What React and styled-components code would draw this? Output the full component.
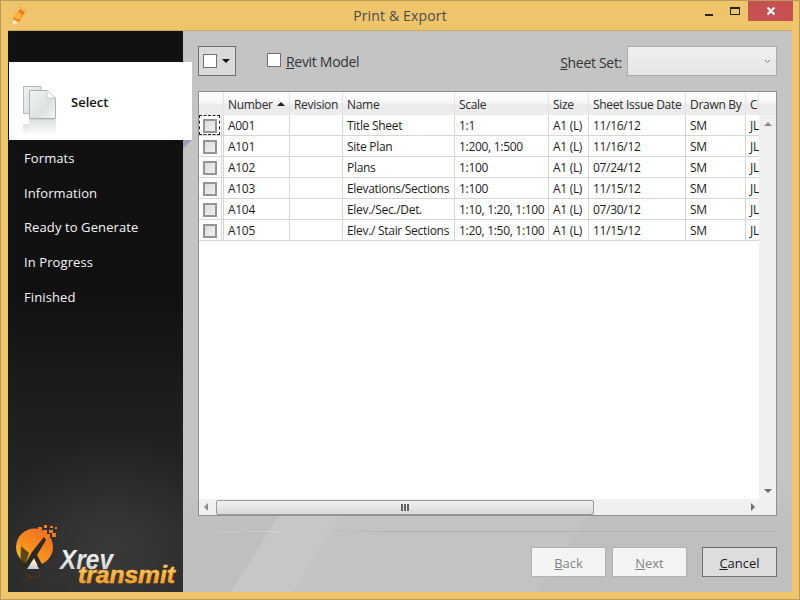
import React from 'react'
import styled, { createGlobalStyle } from 'styled-components'

const GlobalStyle = createGlobalStyle`
  html, body {
    margin: 0;
    padding: 0;
    height: 100%;
  }
  body {
    font-family: "Open Sans", "Liberation Sans", sans-serif;
    font-size: 12px;
    color: #1c1c1c;
  }
`

const COLUMNS = '25px 66px 53px 112px 94px 40px 97px 60px 13px'

const sheets = [
  { number: 'A001', name: 'Title Sheet', scale: '1:1', date: '11/16/12' },
  { number: 'A101', name: 'Site Plan', scale: '1:200, 1:500', date: '11/16/12' },
  { number: 'A102', name: 'Plans', scale: '1:100', date: '07/24/12' },
  { number: 'A103', name: 'Elevations/Sections', scale: '1:100', date: '11/15/12' },
  { number: 'A104', name: 'Elev./Sec./Det.', scale: '1:10, 1:20, 1:100', date: '07/30/12' },
  { number: 'A105', name: 'Elev./ Stair Sections', scale: '1:20, 1:50, 1:100', date: '11/15/12' },
]

const steps = ['Formats', 'Information', 'Ready to Generate', 'In Progress', 'Finished']

const Window = styled.div`
  width: 800px;
  height: 600px;
  box-sizing: border-box;
  background: #eec56a;
  border: 1px solid #b89c58;
  display: flex;
  flex-direction: column;
  overflow: hidden;
`

const TitleBar = styled.header`
  height: 29px;
  flex: none;
  display: flex;
  align-items: flex-start;
  padding: 0 6px 0 9px;
`

const TitleIcon = styled.svg`
  width: 18px;
  height: 20px;
  margin-top: 5px;
  flex: none;
`

const Title = styled.div`
  flex: 1;
  text-align: center;
  font-size: 14px;
  letter-spacing: 0.15px;
  line-height: 29px;
  color: #4b4b4b;
  padding-left: 76px;
`

const WindowControl = styled.div`
  width: ${p => p.$width}px;
  height: 20px;
  flex: none;
  display: flex;
  align-items: center;
  justify-content: center;
  background: ${p => p.$bg || 'transparent'};
`

const MinGlyph = styled.span`
  width: 8px;
  height: 2px;
  margin-top: 7px;
  background: #222;
`

const MaxGlyph = styled.span`
  width: 8px;
  height: 5px;
  border: 1px solid #222;
  border-top-width: 2px;
  margin-top: -1px;
`

const Body = styled.div`
  flex: 1;
  min-height: 0;
  display: flex;
  margin: 0 7px 7px;
  border-top: 1px solid #c9a85c;
`

const Sidebar = styled.nav`
  width: 175px;
  flex: none;
  padding-top: 31px;
  box-sizing: border-box;
  display: flex;
  flex-direction: column;
  background:
    radial-gradient(circle at 60% 92%, rgba(255, 255, 255, 0.07) 0, transparent 110px),
    linear-gradient(180deg, #111 0, #111 260px, #2a2a2a 500px, #2c2c2c 100%);
  position: relative;
  z-index: 1;
`

const SelectedStep = styled.div`
  height: 78px;
  width: 183px;
  margin-left: 1px;
  flex: none;
  background: #fff;
  display: flex;
  align-items: center;
  position: relative;
  font-weight: 600;
  font-size: 13px;
  line-height: 20px;
  padding-top: 2px;
  box-sizing: border-box;
  color: #111;

  &::after {
    content: '';
    position: absolute;
    right: 0;
    top: 100%;
    border-top: 8px solid #9a9eb6;
    border-right: 9px solid transparent;
  }
`

const SelectIcon = styled.svg`
  width: 34px;
  height: 50px;
  margin: 17px 14px 0 14px;
  flex: none;
`

const StepList = styled.div`
  padding-top: 1px;
`

const Step = styled.div`
  height: 34.7px;
  line-height: 34.7px;
  padding-left: 16px;
  font-size: 13px;
  letter-spacing: 0.1px;
  color: #f4f4f4;
`

const Logo = styled.svg`
  display: block;
  margin-top: auto;
  width: 175px;
  height: 70px;
  flex: none;
`

const Main = styled.main`
  flex: 1;
  min-width: 0;
  padding: 15px 15px 15px;
  display: flex;
  flex-direction: column;
  box-sizing: border-box;
  letter-spacing: -0.3px;
  background:
    linear-gradient(180deg, #c4c4c4 0, #c4c4c4 440px, rgba(196, 196, 196, 0) 500px),
    linear-gradient(123deg,
      transparent 0, transparent 345px,
      rgba(255, 255, 255, 0.13) 345px, rgba(255, 255, 255, 0.13) 397px,
      rgba(255, 255, 255, 0.06) 397px, rgba(255, 255, 255, 0.06) 603px,
      transparent 603px),
    #bfbfbf;
`

const Toolbar = styled.div`
  height: 30px;
  flex: none;
  display: flex;
  align-items: center;
`

const SelectAll = styled.div`
  width: 38px;
  height: 30px;
  box-sizing: border-box;
  background: #dadada;
  border: 1px solid #707070;
  display: flex;
  align-items: center;
  padding-left: 4px;
  gap: 5px;
`

const WhiteBox = styled.span`
  width: 14px;
  height: 14px;
  box-sizing: border-box;
  background: #fff;
  border: 1px solid #707070;
  flex: none;
  margin-top: ${p => p.$raised ? '-2px' : '0'};
`

const Caret = styled.span`
  width: 0;
  height: 0;
  border-left: 4px solid transparent;
  border-right: 4px solid transparent;
  border-top: 4px solid #111;
`

const ModelCheck = styled.label`
  margin-left: 31px;
  display: flex;
  align-items: center;
  gap: 5px;
  font-size: 14px;
  color: #333;
`

const Spacer = styled.div`
  flex: 1;
`

const FieldLabel = styled.span`
  font-size: 14px;
  color: #333;
  margin-right: 5px;
  margin-top: 3px;
`

const Combo = styled.div`
  width: 150px;
  height: 30px;
  box-sizing: border-box;
  border: 1px solid #acacac;
  background: linear-gradient(180deg, #f0f0f0, #e5e5e5);
  display: flex;
  align-items: center;
  justify-content: flex-end;
  padding-right: 5px;
`

const Table = styled.section`
  margin-top: 15px;
  height: 425px;
  flex: none;
  box-sizing: border-box;
  border: 1px solid #8e8e8e;
  background: #fff;
  display: flex;
  flex-direction: column;
`

const HeaderRow = styled.div`
  height: 23px;
  flex: none;
  display: grid;
  grid-template-columns: ${COLUMNS} 1fr;
  background: linear-gradient(180deg, #fff 0, #f8f8f8 45%, #ececec 55%, #ebebeb 100%);
`

const HeaderCell = styled.div`
  padding: 2px 0 0 4px;
  white-space: nowrap;
  overflow: hidden;
  box-sizing: border-box;
  border-right: 1px solid #e4e4e4;
  display: flex;
  align-items: center;
  gap: 4px;
  color: #2b2b2b;
`

const SortArrow = styled.span`
  width: 0;
  height: 0;
  flex: none;
  margin-top: -2px;
  border-left: 4px solid transparent;
  border-right: 4px solid transparent;
  border-bottom: 4px solid #222;
`

const Middle = styled.div`
  flex: 1;
  min-height: 0;
  display: flex;
`

const Rows = styled.div`
  flex: 1;
  min-width: 0;
`

const Row = styled.div`
  height: 21px;
  box-sizing: border-box;
  display: grid;
  grid-template-columns: ${COLUMNS};
  border-bottom: 1px solid #d6d6d6;
`

const Cell = styled.div`
  padding-left: 4px;
  line-height: 22px;
  white-space: nowrap;
  overflow: hidden;
  box-sizing: border-box;
  border-right: ${p => (p.$last ? 'none' : '1px solid #d6d6d6')};
`

const CheckCell = styled.div`
  box-sizing: border-box;
  border-right: 3px double #d6d6d6;
  display: flex;
  align-items: center;
  padding: 1px 0 0 4px;
  position: relative;
`

const FocusRing = styled.span`
  position: absolute;
  left: 0;
  top: 0;
  width: 21px;
  height: 20px;
  box-sizing: border-box;
  border: 1px dashed #222;
`

const RowCheck = styled.span`
  width: 14px;
  height: 14px;
  box-sizing: border-box;
  border: 2px solid #949494;
  background: linear-gradient(135deg, #dcdcdc, #f0f0f0);
`

const VScroll = styled.div`
  width: 17px;
  flex: none;
  background: #f0f0f0;
  display: flex;
  flex-direction: column;
  justify-content: space-between;
  align-items: center;
  padding: 7px 0 6px;
  box-sizing: border-box;
`

const ArrowUp = styled.span`
  border-left: 4px solid transparent;
  border-right: 4px solid transparent;
  border-bottom: 4px solid #8a8a8a;
`

const ArrowDown = styled.span`
  border-left: 4px solid transparent;
  border-right: 4px solid transparent;
  border-top: 4px solid #6e6e6e;
`

const HScroll = styled.div`
  height: 16px;
  flex: none;
  background: #f0f0f0;
  display: flex;
  align-items: center;
  padding: 0 21px 0 5px;
`

const ArrowLeft = styled.span`
  flex: none;
  border-top: 4px solid transparent;
  border-bottom: 4px solid transparent;
  border-right: 4px solid #8a8a8a;
`

const ArrowRight = styled.span`
  flex: none;
  margin-left: auto;
  border-top: 4px solid transparent;
  border-bottom: 4px solid transparent;
  border-left: 4px solid #6e6e6e;
`

const Thumb = styled.div`
  width: 378px;
  height: 15px;
  margin-left: 8px;
  flex: none;
  box-sizing: border-box;
  border: 1px solid #9b9b9b;
  border-radius: 2px;
  background: linear-gradient(180deg, #f1f1f1, #d9d9d9);
  display: flex;
  align-items: center;
  justify-content: center;
  gap: 1px;
`

const Grip = styled.span`
  width: 2px;
  height: 7px;
  background: #606060;
`

const Separator = styled.div`
  margin-top: 15px;
  height: 1px;
  flex: none;
  margin-left: -15px;
  background: linear-gradient(90deg, transparent, #d0d0d0 15%, #b2b2b2 35%, #b2b2b2 100%);
`

const Actions = styled.div`
  margin-top: 15px;
  display: flex;
  justify-content: flex-end;
  gap: 6px;
`

const Button = styled.div`
  width: 75px;
  height: 30px;
  box-sizing: border-box;
  margin-left: ${p => (p.$gap ? '9px' : '0')};
  line-height: 30px;
  text-align: center;
  font-size: 13px;
  letter-spacing: 0;
  border: 1px solid ${p => (p.$disabled ? '#adb2b5' : '#707070')};
  background: ${p => (p.$disabled ? '#f4f4f4' : '#dddddd')};
  color: ${p => (p.$disabled ? '#838383' : '#1a1a1a')};
`

const Access = styled.span`
  text-decoration: underline;
`

function SelectGlyph() {
  return (
    <SelectIcon viewBox="0 0 34 50">
      <defs>
        <linearGradient id="page" x1="0" y1="0" x2="1" y2="1">
          <stop offset="0" stopColor="#f2f4f4" />
          <stop offset="0.6" stopColor="#dfe2e2" />
          <stop offset="1" stopColor="#f4f5f5" />
        </linearGradient>
        <linearGradient id="mirror" x1="0" y1="0" x2="0" y2="1">
          <stop offset="0" stopColor="#dde0e0" />
          <stop offset="1" stopColor="#ffffff" />
        </linearGradient>
      </defs>
      <path d="M0.5 0.5H18V27.5H0.5Z" fill="url(#page)" stroke="#b4b8b8" />
      <path d="M6.5 4.5H24L32.5 12V32.5H6.5Z" fill="url(#page)" stroke="#aeb2b2" />
      <path d="M24 4.5V12H32.5Z" fill="#fff" stroke="#c8cccc" />
      <rect x="0" y="38" width="6" height="11" fill="url(#mirror)" />
      <rect x="6" y="34" width="27" height="15" fill="url(#mirror)" />
      <path d="M6.5 33.5H32.5" stroke="#cfd2d2" />
    </SelectIcon>
  )
}

function XrevLogo() {
  return (
    <Logo viewBox="8 522 175 70">
      <defs>
        <linearGradient id="ball" x1="0.8" y1="0" x2="0.1" y2="1">
          <stop offset="0" stopColor="#f26a21" />
          <stop offset="0.6" stopColor="#f7941d" />
          <stop offset="1" stopColor="#fbd01e" />
        </linearGradient>
        <linearGradient id="gold" x1="0" y1="0" x2="0" y2="1">
          <stop offset="0" stopColor="#fff3c4" />
          <stop offset="0.5" stopColor="#fdb73e" />
          <stop offset="1" stopColor="#f08a12" />
        </linearGradient>
        <linearGradient id="silver" x1="0" y1="0" x2="0" y2="1">
          <stop offset="0" stopColor="#ffffff" />
          <stop offset="1" stopColor="#c9c9c9" />
        </linearGradient>
      </defs>
      <circle cx="34.500" cy="547" r="18.500" fill="url(#ball)" />
      <g fill="#f47a20">
        <rect x="44" y="525" width="3" height="3" />
        <rect x="50" y="526" width="3" height="2" />
        <rect x="55" y="527" width="2" height="2" />
        <rect x="38" y="527" width="4" height="3" />
        <rect x="43" y="530" width="4" height="3" />
        <rect x="49" y="530" width="4" height="3" />
        <rect x="46" y="534" width="4" height="4" />
        <rect x="52" y="533" width="4" height="4" />
        <rect x="41" y="533" width="3" height="3" />
      </g>
      <path d="M21 546L29 553L24 568H20Z" fill="#3a2a14" opacity="0.8" />
      <path d="M44 537L46 540L37 555L44 568H39L34 558L27 569H22L32 552Z" fill="#2a2a2a" />
      <path d="M27 569L34 559L39 569Z" fill="url(#silver)" />
      <path d="M24 572L34 578L44 572L38 578H30Z" fill="#7a3c14" opacity="0.5" />
      <text x="60" y="569" fontFamily="Liberation Sans, sans-serif" fontSize="27" fontWeight="700" fontStyle="italic" fill="url(#silver)" textLength="53" lengthAdjust="spacingAndGlyphs">Xrev</text>
      <text x="78" y="583" fontFamily="Liberation Sans, sans-serif" fontSize="24" fontWeight="700" fontStyle="italic" fill="url(#gold)" stroke="#f9a52c" strokeWidth="0.6" textLength="97" lengthAdjust="spacingAndGlyphs">transmit</text>
    </Logo>
  )
}

export default function App() {
  return (
    <Window>
      <GlobalStyle />
      <TitleBar>
        <TitleIcon viewBox="0 0 18 20">
          <path d="M3 13L10 3L15 6L9 16Z" fill="#f07a22" />
          <path d="M10 1L12 3M14 2L15 4M16 5L17 6" stroke="#f5a04a" strokeWidth="1.500" />
          <path d="M3 14L8 17L3 18Z" fill="#f4f4f4" />
          <circle cx="8" cy="10" r="3.500" fill="#f9b233" />
        </TitleIcon>
        <Title>Print &amp; Export</Title>
        <WindowControl $width={26}><MinGlyph /></WindowControl>
        <WindowControl $width={26}><MaxGlyph /></WindowControl>
        <WindowControl $width={45} $bg="#c75050">
          <svg width="10" height="10" viewBox="0 0 10 10">
            <path d="M1.500 1.500L8.500 8.500M8.500 1.500L1.500 8.500" stroke="#fff" strokeWidth="2" />
          </svg>
        </WindowControl>
      </TitleBar>
      <Body>
        <Sidebar>
          <SelectedStep>
            <SelectGlyph />
            Select
          </SelectedStep>
          <StepList>
            {steps.map(step => <Step key={step}>{step}</Step>)}
          </StepList>
          <XrevLogo />
        </Sidebar>
        <Main>
          <Toolbar>
            <SelectAll>
              <WhiteBox />
              <Caret />
            </SelectAll>
            <ModelCheck>
              <WhiteBox $raised />
              <span><Access>R</Access>evit Model</span>
            </ModelCheck>
            <Spacer />
            <FieldLabel><Access>S</Access>heet Set:</FieldLabel>
            <Combo>
              <svg width="7" height="5" viewBox="0 0 7 5">
                <path d="M1 1L3.500 3.500L6 1" fill="none" stroke="#7a7a7a" />
              </svg>
            </Combo>
          </Toolbar>
          <Table>
            <HeaderRow>
              <HeaderCell />
              <HeaderCell>Number <SortArrow /></HeaderCell>
              <HeaderCell>Revision</HeaderCell>
              <HeaderCell>Name</HeaderCell>
              <HeaderCell>Scale</HeaderCell>
              <HeaderCell>Size</HeaderCell>
              <HeaderCell>Sheet Issue Date</HeaderCell>
              <HeaderCell>Drawn By</HeaderCell>
              <HeaderCell>Cl</HeaderCell>
            </HeaderRow>
            <Middle>
              <Rows>
                {sheets.map((sheet, i) => (
                  <Row key={sheet.number}>
                    <CheckCell>
                      <RowCheck />
                      {i === 0 && <FocusRing />}
                    </CheckCell>
                    <Cell>{sheet.number}</Cell>
                    <Cell />
                    <Cell>{sheet.name}</Cell>
                    <Cell>{sheet.scale}</Cell>
                    <Cell>A1 (L)</Cell>
                    <Cell>{sheet.date}</Cell>
                    <Cell>SM</Cell>
                    <Cell $last>JL</Cell>
                  </Row>
                ))}
              </Rows>
              <VScroll>
                <ArrowUp />
                <ArrowDown />
              </VScroll>
            </Middle>
            <HScroll>
              <ArrowLeft />
              <Thumb><Grip /><Grip /><Grip /></Thumb>
              <ArrowRight />
            </HScroll>
          </Table>
          <Separator />
          <Actions>
            <Button $disabled><Access>B</Access>ack</Button>
            <Button $disabled><Access>N</Access>ext</Button>
            <Button $gap><Access>C</Access>ancel</Button>
          </Actions>
        </Main>
      </Body>
    </Window>
  )
}
